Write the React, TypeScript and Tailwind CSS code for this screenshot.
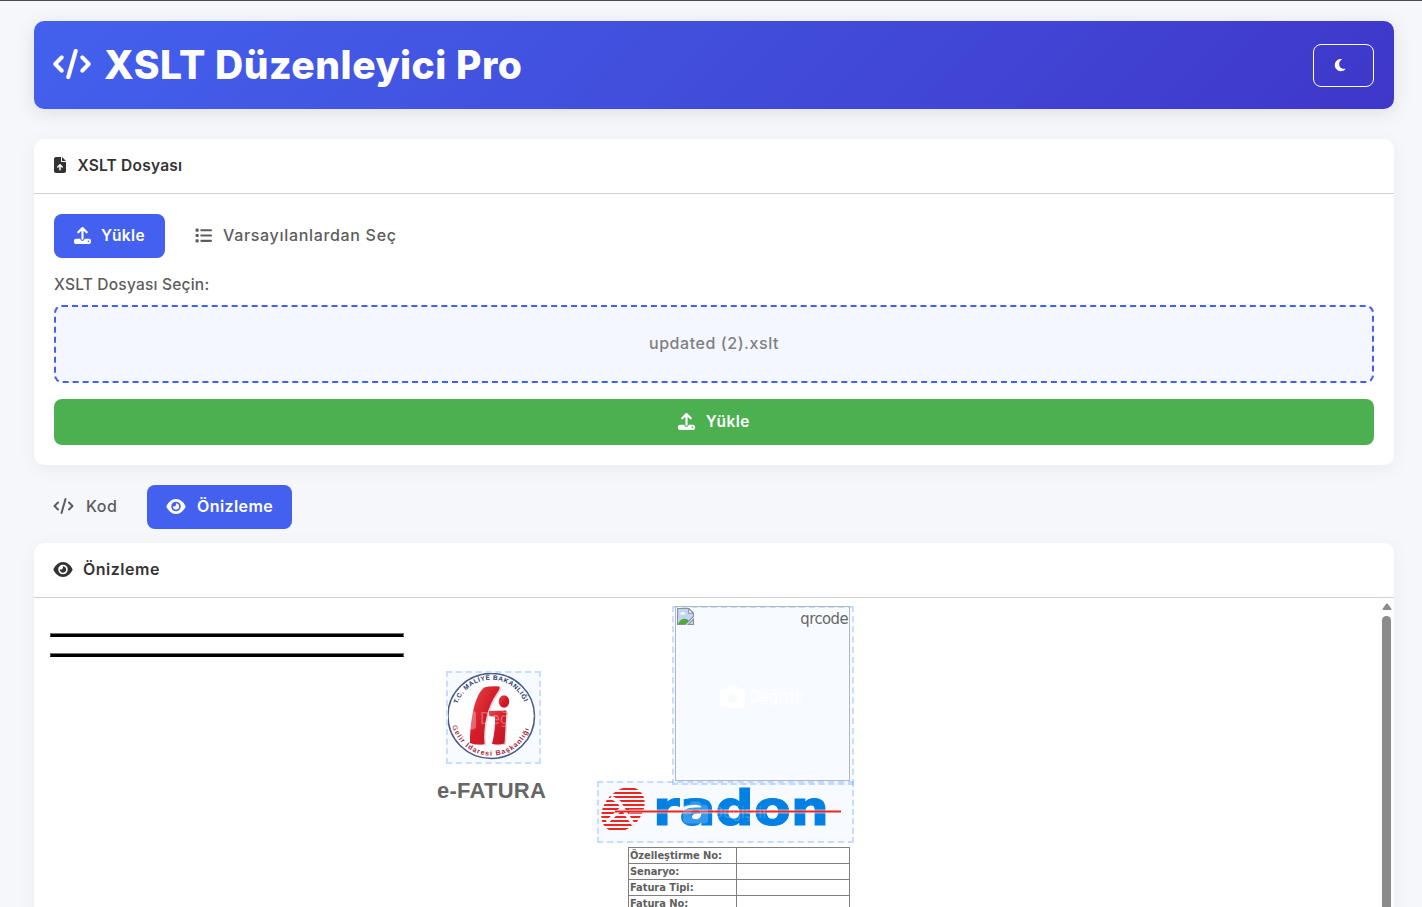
import React from "react";
import { FaCode, FaMoon, FaFileArrowUp, FaUpload, FaList, FaEye, FaCamera } from "react-icons/fa6";

function GibSeal() {
  return (
    <svg width="91" height="89" viewBox="0 0 91 89" className="block">
      <defs>
        <path id="seal-top" d="M9.500 31 A35.500 35.500 0 0 1 77 31.500" />
        <path id="seal-bottom" d="M4.200 53 A40.500 40.500 0 0 0 82.300 53" />
        <linearGradient id="seal-red" x1="0" y1="0" x2="1" y2="1">
          <stop offset="0" stopColor="#e64a50" />
          <stop offset="0.5" stopColor="#d41c28" />
          <stop offset="1" stopColor="#bb1621" />
        </linearGradient>
      </defs>
      <ellipse cx="43.200" cy="43" rx="43.300" ry="42.500" fill="#ffffff" stroke="#4a5a8e" strokeWidth="1.6" />
      <path d="M51.500 13.500 Q43 12.500 36 14.500 C28 21 22 43 22 70 Q29 72.500 36.500 71 C35 54 39 34 49 20 Q52 16 51.500 13.500Z" transform="translate(1.5 1)" fill="#d9d4d8" />
      <path d="M51.500 13.500 Q43 12.500 36 14.500 C28 21 22 43 22 70 Q29 72.500 36.500 71 C35 54 39 34 49 20 Q52 16 51.500 13.500Z" fill="url(#seal-red)" />
      <ellipse cx="56" cy="28.500" rx="5.200" ry="6.200" fill="url(#seal-red)" />
      <path d="M41 38 L58.500 37.500 L56.500 70.500 Q50 72 44 71 Q47.500 57 47 43.500 L41 43Z" transform="translate(1.5 1)" fill="#d9d4d8" />
      <path d="M41 38 L58.500 37.500 L56.500 70.500 Q50 72 44 71 Q47.500 57 47 43.500 L41 43Z" fill="url(#seal-red)" />
      <text className="fill-[#26366f] font-['Liberation_Sans'] text-[6.500px] font-bold">
        <textPath href="#seal-top" textLength="86">T.C. MALİYE BAKANLIĞI</textPath>
      </text>
      <text className="fill-[#a3243c] font-['Liberation_Sans'] text-[7px] font-bold">
        <textPath href="#seal-bottom" textLength="102">Gelir İdaresi Başkanlığı</textPath>
      </text>
    </svg>
  );
}

function RadonLogo() {
  return (
    <svg width="253" height="58" viewBox="0 0 253 58" className="block">
      <defs>
        <clipPath id="radon-disc">
          <ellipse cx="24" cy="26.500" rx="25" ry="18.500" transform="rotate(-48 24 26.500)" />
        </clipPath>
      </defs>
      <g clipPath="url(#radon-disc)" stroke="#ee2420" strokeWidth="2.200">
        {[6, 10, 14, 18, 22, 26, 30, 34, 38, 42, 46].map((y) => (
          <path key={y} d={`M0 ${y}H48`} />
        ))}
        <path d="M12 14L20 19L26 29L36 44M23 25L8 39" fill="none" stroke="#f8fbff" strokeWidth="3.500" />
      </g>
      <text x="54" y="41.500" textLength="176" lengthAdjust="spacingAndGlyphs" stroke="#0380e4" strokeWidth="1.200" className="fill-[#0380e4] font-['DejaVu_Sans'] text-[48.500px] font-bold">radon</text>
      <path d="M30 28.500H242" stroke="#f8fbff" strokeWidth="4" opacity="0.6" />
      <path d="M16 28.500H242" stroke="#ee2420" strokeWidth="1.800" />
    </svg>
  );
}

function BrokenImage() {
  return (
    <svg width="17" height="17" viewBox="0 0 16 16" className="shrink-0">
      <path d="M.5.5H11L15.500 5V8L8 15.500H.5Z" fill="#c3d5f5" stroke="#8b9096" />
      <path d="M11 .5V5H15.500Z" fill="#fff" stroke="#8b9096" />
      <path d="M3 6Q3 4 5 4Q7 3 8 6Z" fill="#fff" />
      <path d="M1 15Q3 10 7 10Q10 10 11 12L8 15Z" fill="#51a73b" />
      <path d="M15.500 10.500V15.500H10.500Z" fill="#c3d5f5" stroke="#8b9096" />
    </svg>
  );
}

function ChangeHint({ className }: { className: string }) {
  return (
    <span className={`pointer-events-none absolute flex items-center whitespace-nowrap font-['DejaVu_Sans_Condensed','DejaVu_Sans',sans-serif] text-[16px] text-white ${className}`}>
      <FaCamera className="mr-1 size-[25px] shrink-0" />
      Değiştir
    </span>
  );
}

const rows = ["Özelleştirme No:", "Senaryo:", "Fatura Tipi:", "Fatura No:"];

export default function App() {
  return (
    <div className="h-[907px] overflow-hidden border-t border-[#4b4c50] bg-[#f5f7fb] pt-5 pr-7 pl-[34px] font-['Inter',sans-serif] text-[15.500px] text-[#333]">
      <header className="flex h-[88px] items-center rounded-[10px] bg-linear-135 from-[#4361ee] to-[#3f37c9] pr-5 pl-[19px] text-white shadow-[0_4px_20px_rgba(0,0,0,0.1)]">
        <FaCode className="-mt-0.5 h-[30px] w-[38px] stroke-white stroke-[6]" />
        <h1 className="-mt-0.5 ml-[13px] text-[39px] leading-none font-extrabold tracking-[0.52px] whitespace-nowrap">XSLT Düzenleyici Pro</h1>
        <button className="ml-auto flex h-[43px] w-[61px] items-center rounded-lg border border-white pb-px pl-[19px]">
          <FaMoon className="size-[14px]" />
        </button>
      </header>

      <section className="mt-[30px] h-[326px] rounded-[10px] bg-white shadow-[0_4px_20px_rgba(0,0,0,0.05)]">
        <div className="flex h-[55px] items-center border-b border-[#cfd2d5] px-5 pb-px">
          <FaFileArrowUp className="-mt-px h-4 w-3" />
          <h2 className="ml-[11.500px] font-semibold tracking-[0.22px]">XSLT Dosyası</h2>
        </div>
        <div className="flex flex-col px-5 pt-5">
          <div className="flex h-11">
            <button className="flex w-[111px] items-center rounded-lg bg-[#4361ee] pl-[19.500px] font-semibold text-white">
              <FaUpload className="-mt-0.5 size-[17px]" />
              <span className="ml-[10.500px] tracking-[0.45px]">Yükle</span>
            </button>
            <button className="ml-[30px] flex items-center text-[16px] font-medium text-[#5c5c5c]">
              <FaList className="-mt-0.5 size-[17px]" />
              <span className="-mt-0.5 ml-[11px] tracking-[0.68px]">Varsayılanlardan Seç</span>
            </button>
          </div>
          <label className="mt-[15px] h-6 leading-6 font-medium tracking-[0.22px] text-[#5c5c5c]">XSLT Dosyası Seçin:</label>
          <div className="mt-2 flex h-[78px] items-center justify-center rounded-lg border-2 border-dashed border-[#4361ee] bg-[#f4f7ff] text-[16px] font-medium text-[#808080]">
            <span className="-mt-0.5 tracking-[0.56px]">updated (2).xslt</span>
          </div>
          <button className="mt-4 flex h-[46px] items-center justify-center rounded-lg bg-[#4caf50] font-semibold text-white">
            <FaUpload className="-mt-0.5 size-[17px]" />
            <span className="ml-[10.500px] tracking-[0.45px]">Yükle</span>
          </button>
        </div>
      </section>

      <nav className="mt-5 flex h-11">
        <button className="flex w-[113px] items-center pl-[19px] text-[16px] font-medium text-[#5c5c5c]">
          <FaCode className="-mt-0.5 h-4 w-[21px]" />
          <span className="-mt-0.5 ml-3 tracking-[0.5px]">Kod</span>
        </button>
        <button className="flex w-[145px] items-center rounded-lg bg-[#4361ee] pl-[19px] text-[16px] font-semibold text-white">
          <FaEye className="-mt-0.5 h-[17px] w-5" />
          <span className="-mt-0.5 ml-[11px] tracking-[0.42px]">Önizleme</span>
        </button>
      </nav>

      <section className="mt-[14px] h-[420px] overflow-hidden rounded-t-[10px] bg-white shadow-[0_4px_20px_rgba(0,0,0,0.05)]">
        <div className="flex h-[55px] items-center border-b border-[#cfd2d5] pl-[18.500px] pb-px">
          <FaEye className="-mt-px h-[17px] w-5" />
          <h2 className="-mt-0.5 ml-[10.500px] text-[16px] font-semibold tracking-[0.5px]">Önizleme</h2>
        </div>
        <div className="flex h-[360px] items-start">
          <div className="ml-4 flex w-[354px] flex-col gap-4 pt-[35px]">
            <hr className="h-1 border border-t-[#777] border-r-[#777] border-b-black border-l-[#555] bg-black" />
            <hr className="h-1 border border-t-[#777] border-r-[#777] border-b-black border-l-[#555] bg-black" />
          </div>
          <div className="flex w-[193px] flex-col items-start pt-[73px]">
            <div className="relative ml-[42px] h-[93px] w-[95px] border-2 border-dashed border-[#0d6efd]/20 bg-[#0d6efd]/3">
              <GibSeal />
              <ChangeHint className="top-[33px] left-[3px] w-[86px] overflow-hidden opacity-30" />
            </div>
            <p className="mt-[13px] ml-[33px] font-['Liberation_Sans',sans-serif] text-[22px] leading-7 font-bold tracking-[0.25px] text-[#666]">e-FATURA</p>
          </div>
          <div className="flex w-[257px] flex-col items-end pt-2">
            <div className="relative h-[179px] w-[182px] border-2 border-dashed border-[#0d6efd]/20 bg-[#0d6efd]/3 pl-px">
              <div className="-mt-0.5 flex h-[175px] w-[175px] items-start justify-between border border-[#b4b8be] p-px font-['DejaVu_Sans_Condensed','DejaVu_Sans',sans-serif] text-[16.500px] leading-[22px] text-[#666]">
                <BrokenImage />
                <span className="tracking-[-0.55px]">qrcode</span>
              </div>
              <ChangeHint className="top-[76px] left-[46px]" />
            </div>
            <div className="relative -mt-1 h-[62px] w-[257px] border-2 border-dashed border-[#0d6efd]/20 bg-[#0d6efd]/3">
              <RadonLogo />
              <ChangeHint className="top-[17px] left-[84px] opacity-20" />
            </div>
            <table className="mt-1 mr-1 w-[222px] table-fixed border-collapse font-['DejaVu_Sans_Condensed','DejaVu_Sans',sans-serif] text-[11px] leading-[15px] font-bold tracking-[-0.05px] text-[#5f5f5f]">
              <tbody>
                {rows.map((row) => (
                  <tr key={row} className="h-4">
                    <td className="w-[108px] border border-[#808080] p-0 pl-px whitespace-nowrap">{row}</td>
                    <td className="border border-[#808080] p-0" />
                  </tr>
                ))}
              </tbody>
            </table>
          </div>
          <div className="ml-auto flex h-full w-[15px] flex-col items-center bg-[#fcfcfc] pt-[5px]">
            <svg width="10" height="8" viewBox="0 0 10 8" className="shrink-0">
              <path d="M4 1Q5 0 6 1L9.500 6Q9.500 7 8.500 7H1.500Q.5 7 .5 6Z" fill="#8b8b8b" />
            </svg>
            <div className="mt-[5px] h-[400px] w-[9px] shrink-0 rounded-full bg-[#8b8b8b]" />
          </div>
        </div>
      </section>
    </div>
  );
}
